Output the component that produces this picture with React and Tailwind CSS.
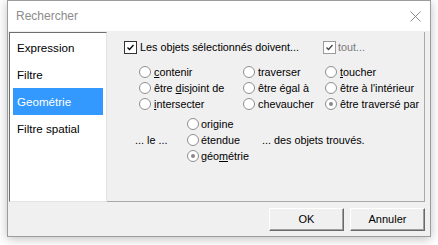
import React from "react";

const F = { fontFamily: '"Liberation Sans", Arial, sans-serif' };

function Radio({ checked }) {
  return (
    <span className="inline-flex w-[12px] h-[12px] shrink-0 items-center justify-center rounded-full border border-[#8f8f8f] bg-white">
      {checked && <span className="block w-[4px] h-[4px] rounded-full bg-[#8a8a8a]" />}
    </span>
  );
}

function Check({ disabled }) {
  return (
    <span
      className={
        "inline-flex w-[13px] h-[13px] shrink-0 items-center justify-center border bg-white " +
        (disabled ? "border-[#9a9a9a]" : "border-[#333333]")
      }
    >
      <svg width="9" height="9" viewBox="0 0 9 9">
        <path d="M1.5 4.5 L3.5 6.5 L7.5 2" fill="none" stroke={disabled ? "#444" : "#000"} strokeWidth="1.3" />
      </svg>
    </span>
  );
}

function RItem({ checked, gap, children }) {
  return (
    <div className="flex items-center h-[16px]">
      <Radio checked={checked} />
      <span className={gap}>{children}</span>
    </div>
  );
}

export default function App() {
  return (
    <div className="w-[438px] h-[245px] bg-white overflow-hidden" style={F}>
      <div className="ml-[7px] w-[424px] h-[237px] border border-[#9c9c9c] bg-[#f0f0f0] flex flex-col shadow-[0_2px_10px_rgba(0,0,0,0.25)]">
        {/* title bar */}
        <div className="h-[30px] bg-white flex items-center justify-between pl-[8px] pr-[9px]">
          <span className="text-[12px] text-[#8c8c8c]">Rechercher</span>
          <svg width="11" height="11" viewBox="0 0 11 11">
            <path d="M0.5 0.5 L10.5 10.5 M10.5 0.5 L0.5 10.5" stroke="#808080" strokeWidth="0.9" />
          </svg>
        </div>

        {/* body */}
        <div className="flex pt-[1px] pl-[1px]">
          {/* list */}
          <div className="w-[98px] h-[170px] bg-white border-t border-l border-t-[#6e6e6e] border-l-[#6e6e6e] border-r border-b border-r-[#e3e3e3] border-b-[#e3e3e3] pt-[1px] px-[3px] text-[11.6px] text-black">
            <div className="h-[27px] flex items-center pl-[4px]">Expression</div>
            <div className="h-[27px] flex items-center pl-[4px]">Filtre</div>
            <div className="h-[27px] flex items-center pl-[4px] bg-[#3399ff] text-white">Geométrie</div>
            <div className="h-[27px] flex items-center pl-[4px]">Filtre spatial</div>
          </div>

          {/* right panel */}
          <div className="w-[318px] h-[170px] border-r border-b border-[#a9a9a9] text-[10.8px] text-black">
            <div className="flex items-center h-[13px] mt-[9px] pl-[17px]">
              <div className="w-[199px] flex items-center">
                <Check />
                <span className="ml-[3px]">Les objets sélectionnés doivent...</span>
              </div>
              <div className="flex items-center">
                <Check disabled />
                <span className="ml-[2px] text-[#7a7a7a]">tout...</span>
              </div>
            </div>

            <div className="flex mt-[10px] pl-[32px]">
              <div className="w-[104px]">
                <RItem gap="ml-[3px]"><u className="underline-offset-1">c</u>ontenir</RItem>
                <RItem gap="ml-[3px]">être <u className="underline-offset-1">d</u>isjoint de</RItem>
                <RItem gap="ml-[3px]"><u className="underline-offset-1">i</u>ntersecter</RItem>
              </div>
              <div className="w-[82px]">
                <RItem gap="ml-[3px]">traverser</RItem>
                <RItem gap="ml-[3px]">être égal à</RItem>
                <RItem gap="ml-[3px]">chevaucher</RItem>
              </div>
              <div>
                <RItem gap="ml-[3px]"><u className="underline-offset-1">t</u>oucher</RItem>
                <RItem gap="ml-[3px]">être à l'intérieur</RItem>
                <RItem checked gap="ml-[3px]">être traversé par</RItem>
              </div>
            </div>

            <div className="flex items-center mt-[4px] pl-[28px]">
              <span className="w-[52px]">... le ...</span>
              <div className="w-[75px]">
                <RItem gap="ml-[2px]">ori<u className="underline-offset-1">g</u>ine</RItem>
                <RItem gap="ml-[2px]">étendue</RItem>
                <RItem checked gap="ml-[2px]">géo<u className="underline-offset-1">m</u>étrie</RItem>
              </div>
              <span>... des objets trouvés.</span>
            </div>
          </div>
        </div>

        {/* buttons */}
        <div className="flex justify-end gap-[6px] mt-[6px] pr-[5px] text-[11px] text-black">
          <button className="w-[75px] h-[23px] bg-[#f0f0f0] border border-t-white border-l-white border-r-[#696969] border-b-[#696969] shadow-[inset_-1px_-1px_0_#a0a0a0]">OK</button>
          <button className="w-[75px] h-[23px] bg-[#f0f0f0] border border-t-white border-l-white border-r-[#696969] border-b-[#696969] shadow-[inset_-1px_-1px_0_#a0a0a0]">Annuler</button>
        </div>
      </div>
    </div>
  );
}
